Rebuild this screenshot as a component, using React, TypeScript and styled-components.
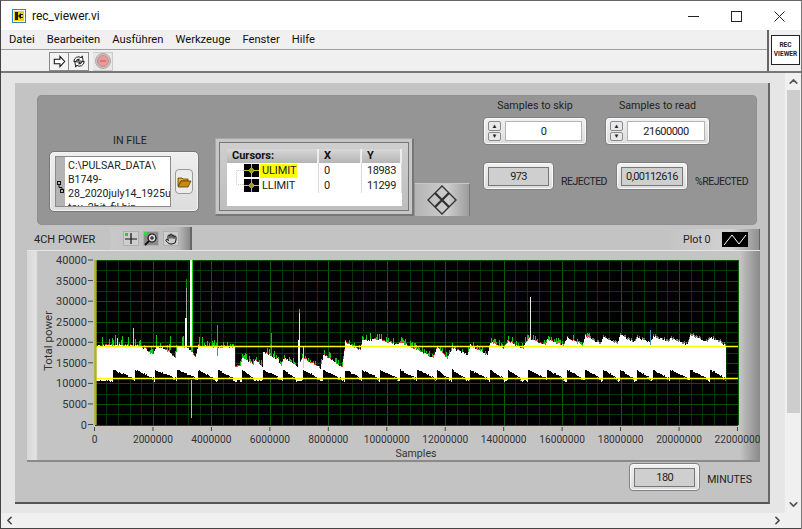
import React from 'react';
import styled, { createGlobalStyle } from 'styled-components';
import { ChevronDown, ChevronLeft, ChevronRight, ChevronUp, Hand } from 'lucide-react';

const UI_FONT = 'Roboto, "Open Sans", sans-serif';

const GlobalStyle = createGlobalStyle`
  html, body {
    margin: 0;
    padding: 0;
    background: #fff;
  }
  * {
    box-sizing: border-box;
  }
`;

const Window = styled.div`
  width: 802px;
  height: 529px;
  display: flex;
  flex-direction: column;
  overflow: hidden;
  font-family: ${UI_FONT};
  font-size: 11px;
  color: #222;
  background: #f0f0f0;
  border-left: 1px solid #444;
  border-top: 1px solid #666;
  border-right: 1px solid #777;
`;

const TitleBar = styled.div`
  height: 29px;
  flex: none;
  display: flex;
  align-items: center;
  background: #fff;
  padding: 1px 0 0 11px;
`;

const Title = styled.span`
  margin-left: 6px;
  font-size: 12px;
  color: #111;
`;

const WindowButtons = styled.div`
  margin-left: auto;
  display: flex;
`;

const WindowButton = styled.div`
  width: 43px;
  height: 28px;
  display: flex;
  align-items: center;
  justify-content: center;
`;

const Chrome = styled.div`
  height: 43px;
  flex: none;
  display: flex;
  background: #f0f0f0;
  border-bottom: 2px solid #777;
`;

const ChromeLeft = styled.div`
  width: 768px;
  display: flex;
  flex-direction: column;
  border-right: 2px solid #666;
`;

const MenuBar = styled.div`
  height: 20px;
  display: flex;
  align-items: center;
  padding-left: 8px;
  gap: 12px;
  font-size: 11.2px;
  color: #111;
  border-bottom: 1px solid #a0a0a0;
`;

const ToolBar = styled.div`
  flex: 1;
  display: flex;
  align-items: center;
  padding: 1px 0 0 48px;
`;

const ToolButton = styled.div`
  width: 20px;
  height: 19px;
  display: flex;
  align-items: center;
  justify-content: center;
  background: #f4f4f4;
  border: 1px solid #8a8a8a;
  & + & {
    border-left: none;
  }
`;

const StopButton = styled(ToolButton)`
  margin-left: 4px;
  border: 1px solid #ccc;
  background: #e8e8e8;
`;

const IconPane = styled.div`
  flex: 1;
  display: flex;
  align-items: center;
  padding: 0 0 2px 2px;
`;

const ViIcon = styled.div`
  width: 29px;
  height: 30px;
  background: #fff;
  border: 1px solid #222;
  display: flex;
  flex-direction: column;
  align-items: center;
  justify-content: center;
  font-size: 6.5px;
  font-weight: 700;
  line-height: 9px;
`;

const Body = styled.div`
  flex: 1;
  display: flex;
  min-height: 0;
`;

const PaneArea = styled.div`
  width: 784px;
  padding: 10px 15px 9px 14px;
  background: #e6e6e6;
`;

const Panel = styled.div`
  height: 100%;
  width: 755px;
  padding: 12px 0 0 12px;
  background: #c3c3c3;
  border-right: 2px solid #666;
  border-bottom: 2px solid #555;
`;

const VScroll = styled.div`
  flex: 1;
  display: flex;
  flex-direction: column;
  align-items: center;
  justify-content: space-between;
  background: #f0f0f0;
  color: #555;
`;

const VThumb = styled.div`
  align-self: stretch;
  height: 323px;
  background: #cdcdcd;
`;

const ScrollEnd = styled.div`
  height: 17px;
  display: flex;
  align-items: center;
  justify-content: center;
`;

const HScroll = styled.div`
  height: 16px;
  flex: none;
  display: flex;
  align-items: center;
  justify-content: space-between;
  padding: 0 17px 0 2px;
  background: #f0f0f0;
  color: #444;
  border-bottom: 1px solid #444;
`;

const GroupBox = styled.div`
  width: 720px;
  height: 130px;
  margin-left: 10px;
  display: flex;
  background: #959595;
  border-radius: 5px;
  box-shadow: inset 0 0 0 1px #8f8f8f;
`;

const FileColumn = styled.div`
  width: 150px;
  margin: 38px 0 0 12px;
  display: flex;
  flex-direction: column;
  align-items: center;
`;

const Label = styled.span`
  font-size: 10.7px;
  line-height: 16px;
  white-space: nowrap;
  color: #222;
`;

const FileLabel = styled(Label)`
  padding-left: 12px;
`;

const FileControl = styled.div`
  margin-top: 2px;
  width: 150px;
  height: 61px;
  display: flex;
  align-items: center;
  padding: 0 5px;
  background: linear-gradient(#efefef, #dcdcdc);
  border: 1px solid #777;
  border-radius: 5px;
  box-shadow: inset 0 0 0 1px #f4f4f4;
`;

const PathBox = styled.div`
  width: 117px;
  height: 51px;
  display: flex;
  overflow: hidden;
  background: #fff;
  border: 1px solid #8a8a8a;
`;

const PathStrip = styled.div`
  width: 9px;
  flex: none;
  display: flex;
  align-items: center;
  justify-content: center;
  padding-top: 10px;
  background: #b4b4b4;
`;

const PathText = styled.div`
  padding: 2px 0 0 3px;
  font-size: 10.6px;
  line-height: 14px;
  white-space: nowrap;
  color: #222;
`;

const BrowseButton = styled.div`
  width: 18px;
  height: 25px;
  margin-left: 4px;
  display: flex;
  align-items: center;
  justify-content: center;
  background: #ececec;
  border: 1px solid #9a9a9a;
  border-radius: 4px;
`;

const CursorColumn = styled.div`
  margin: 43px 0 0 16px;
  height: 78px;
  display: flex;
  align-items: flex-end;
`;

const CursorFrame = styled.div`
  width: 199px;
  height: 78px;
  padding: 10px 10px 9px 11px;
  background: linear-gradient(#cfcfcf, #bdbdbd);
  border: 1px solid #a8a8a8;
  border-right: 2px solid #777;
  border-bottom: 2px solid #777;
  box-shadow: inset 0 0 0 3px #c6c6c6, inset 0 0 0 4px #777;
`;

const CursorTable = styled.div`
  position: relative;
  height: 57px;
  display: grid;
  grid-template-columns: 92px 43px 1fr;
  grid-template-rows: 14px 15px 1fr;
  background: #fff;
  font-size: 11px;
`;

const HeaderCell = styled.div`
  padding-left: 5px;
  font-weight: 700;
  line-height: 14px;
  font-size: 11px;
  color: #111;
  background: linear-gradient(#d8d8d8, #b4b4b4);
  border-right: 2px solid #ededed;
`;

const Cell = styled.div<{ $pad?: number }>`
  height: 15px;
  display: flex;
  align-items: center;
  padding-left: ${(p) => p.$pad ?? 5}px;
  letter-spacing: -0.4px;
  border-right: 1px solid #d8d8d8;
`;

const Highlight = styled.span<{ $on?: boolean }>`
  margin-left: 1px;
  padding: 0 1px 0 2px;
  line-height: 14px;
  letter-spacing: -0.1px;
  background: ${(p) => (p.$on ? '#ffff00' : 'transparent')};
`;

const TreeLine = styled.div`
  position: absolute;
  left: 9px;
  top: 21px;
  width: 8px;
  height: 15px;
  border: 1px dotted #c8c8c8;
  border-right: none;
  border-radius: 2px 0 0 2px;
`;

const DiamondButton = styled.div`
  width: 55px;
  height: 33px;
  margin-left: 1px;
  display: flex;
  align-items: center;
  justify-content: center;
  background: linear-gradient(to right, #b4b4b4, #cecece 60%, #9c9c9c);
  border-top: 1px solid #c8c8c8;
  border-right: 1px solid #777;
`;

const NumbersColumn = styled.div`
  margin: 3px 0 0 13px;
  display: flex;
  flex-direction: column;
`;

const NumbersRow = styled.div<{ $gap: number }>`
  display: flex;
  gap: ${(p) => p.$gap}px;
`;

const Field = styled.div`
  display: flex;
  flex-direction: column;
  align-items: center;
`;

const FieldLabel = styled(Label)`
  margin-bottom: 3px;
`;

const Bevel = styled.div<{ $w: number }>`
  width: ${(p) => p.$w}px;
  height: 28px;
  display: flex;
  align-items: center;
  padding: 0 4px;
  background: linear-gradient(#f1f1f1, #dcdcdc);
  border: 1px solid #7f7f7f;
  border-radius: 4px;
  box-shadow: inset 0 0 0 1px #fafafa;
`;

const Spinner = styled.div`
  width: 13px;
  height: 20px;
  flex: none;
  display: flex;
  flex-direction: column;
  gap: 1px;
`;

const SpinButton = styled.div`
  flex: 1;
  display: flex;
  align-items: center;
  justify-content: center;
  font-size: 6px;
  line-height: 1;
  color: #222;
  background: #e9e9e9;
  border: 1px solid #8a8a8a;
  border-radius: 2px;
`;

const NumberInput = styled.div`
  flex: 1;
  height: 20px;
  margin-left: 4px;
  text-align: center;
  line-height: 19px;
  font-size: 11px;
  letter-spacing: -0.5px;
  background: #fff;
  border: 1px solid #b4b4b4;
`;

const Readout = styled.div`
  flex: 1;
  height: 19px;
  text-align: center;
  line-height: 18px;
  font-size: 11px;
  letter-spacing: -0.6px;
  background: #cfcfcf;
  border: 1px solid #777;
`;

const ResultRow = styled(NumbersRow)`
  margin-top: 17px;
`;

const ResultLabel = styled(Label)`
  margin: 12px 0 0 7px;
  font-size: 10.5px;
  letter-spacing: -0.5px;
`;

const ResultGap = styled.div<{ $w: number }>`
  width: ${(p) => p.$w}px;
`;

const GraphHeader = styled.div`
  width: 733px;
  height: 25px;
  display: flex;
  align-items: flex-end;
`;

const GraphName = styled.span`
  width: 83px;
  padding: 0 0 4px 7px;
  font-size: 11px;
  white-space: nowrap;
  color: #222;
`;

const Palette = styled.div`
  width: 82px;
  height: 23px;
  display: flex;
  align-items: center;
  gap: 4px;
  padding-left: 13px;
  background: linear-gradient(to right, #c8c8c8, #bcbcbc 85%, #8a8a8a);
  border-right: 2px solid #666;
`;

const PaletteTool = styled.div<{ $on?: boolean }>`
  width: 16px;
  height: 15px;
  display: flex;
  align-items: center;
  justify-content: center;
  background: ${(p) => (p.$on ? '#8c8c8c' : '#cecece')};
  border: 1px solid #b0b0b0;
`;

const PlotLegend = styled.div`
  margin-left: auto;
  width: 91px;
  height: 21px;
  display: flex;
  align-items: center;
  padding-left: 14px;
  gap: 11px;
  font-size: 10.7px;
  background: linear-gradient(to right, #c4c4c4, #d2d2d2 70%, #909090);
  border-right: 1px solid #666;
`;

const LegendSwatch = styled.div`
  width: 26px;
  height: 15px;
  background: #000;
  display: flex;
`;

const GraphFrame = styled.div`
  width: 733px;
  height: 212px;
  background: linear-gradient(
    to right,
    #d8d8d8,
    #e2e2e2 9px,
    #c4c4c4 11px,
    #c4c4c4 calc(100% - 20px),
    #8c8c8c calc(100% - 1px)
  );
  border-bottom: 2px solid #8a8a8a;
  border-top: 1px solid #e4e4e4;
`;

const Chart = styled.svg`
  display: block;
  font-family: ${UI_FONT};
  fill: #333;
`;

const Footer = styled.div`
  width: 733px;
  margin-top: 1px;
  display: flex;
  align-items: center;
  justify-content: flex-end;
`;

const MinutesLabel = styled(Label)`
  margin: 6px 8px 0 7px;
  font-size: 10.5px;
`;

// --- chart data, page coordinates ---

const PLOT = { left: 95, right: 738, top: 260, bottom: 425 };
const yOf = (v: number) => 424.5 - (v / 40000) * 164.5;
const xOf = (v: number) => 94.5 + (v / 22000000) * 643;

const TOP_EDGE: [number, number][] = [
  [95, 346], [115, 345], [133, 346], [137, 345], [143, 348], [153, 355], [156, 346], [165, 349],
  [175, 358], [177, 346], [187, 347], [195, 357], [198, 346], [216, 347], [234, 347], [235, 367],
  [240, 366], [242, 357], [250, 362], [253, 366], [254, 360], [262, 366], [263, 352], [278, 360],
  [281, 367], [283, 358], [295, 365], [297, 366], [303, 358], [320, 368], [323, 355], [342, 367],
  [345, 342], [360, 350], [362, 340], [380, 340], [398, 345], [400, 342], [417, 350], [433, 358],
  [437, 347], [447, 358], [452, 348], [467, 355], [470, 345], [487, 355], [490, 342], [503, 348],
  [508, 342], [523, 348], [528, 338], [545, 345], [547, 340], [563, 345], [567, 338], [582, 345],
  [585, 336], [600, 344], [603, 337], [617, 344], [620, 335], [633, 342], [637, 338], [650, 342],
  [653, 336], [668, 342], [670, 338], [687, 345], [690, 335], [707, 342], [710, 337], [725, 345],
];

const TEETH: [number, number][] = [
  [113, 133], [135, 153], [155, 175], [177, 196], [198, 214], [218, 232], [242, 253], [263, 280],
  [283, 295], [303, 319], [323, 340], [345, 360], [362, 378], [380, 397], [400, 415], [417, 435],
  [437, 448], [452, 465], [470, 487], [490, 503], [508, 520], [528, 545], [547, 563], [567, 582],
  [585, 600], [603, 617], [620, 633], [637, 650], [653, 668], [670, 687], [690, 707], [710, 725],
];

const SPIKES: { x: number; top: number; bottom: number; color: string; width?: number }[] = [
  { x: 117, top: 338, bottom: 346, color: '#ddd' },
  { x: 133, top: 328, bottom: 346, color: '#ccc' },
  { x: 156, top: 335, bottom: 346, color: '#11c811' },
  { x: 170, top: 336, bottom: 350, color: '#11c811' },
  { x: 186, top: 279, bottom: 288, color: '#0a8a0a' },
  { x: 186, top: 288, bottom: 318, color: '#a8a8a8' },
  { x: 185.5, top: 318, bottom: 346, color: '#fff', width: 2 },
  { x: 191, top: 260, bottom: 346, color: '#fff', width: 2 },
  { x: 192.5, top: 260, bottom: 346, color: '#19d419' },
  { x: 191.5, top: 380, bottom: 418, color: '#b8b8b8' },
  { x: 217, top: 325, bottom: 356, color: '#3f8fc4' },
  { x: 271, top: 333, bottom: 356, color: '#d24a4a' },
  { x: 299, top: 309, bottom: 313, color: '#19d419' },
  { x: 299, top: 313, bottom: 340, color: '#e0e0e0' },
  { x: 299, top: 340, bottom: 368, color: '#fff', width: 2 },
  { x: 303, top: 346, bottom: 368, color: '#cfcfcf' },
  { x: 530, top: 297, bottom: 340, color: '#e8e8e8' },
  { x: 650, top: 330, bottom: 345, color: '#3f8fc4' },
];

const topAt = (x: number) => {
  for (let i = 1; i < TOP_EDGE.length; i++) {
    const [x0, y0] = TOP_EDGE[i - 1];
    const [x1, y1] = TOP_EDGE[i];
    if (x <= x1) return y0 + ((x - x0) / (x1 - x0)) * (y1 - y0);
  }
  return 345;
};

function buildTrace() {
  let seed = 7;
  const rand = () => {
    seed = (seed * 16807) % 2147483647;
    return seed / 2147483647;
  };
  let white = '';
  let black = '';
  let green = '';
  let red = '';
  let cyan = '';
  let fringe = '';
  for (let x = 95; x <= 725; x++) {
    const top = Math.round(topAt(x) + rand() * 2 - 1);
    const tooth = TEETH.find(([a, b]) => x >= a && x <= b);
    const low = tooth
      ? 370 + ((x - tooth[0]) / (tooth[1] - tooth[0])) * 8 + rand() * 1.4 - 0.7
      : 380 + rand() * 2;
    const px = x + 0.5;
    white += `M${px} ${top}V${Math.round(low)}`;
    if (tooth) black += `M${px} ${Math.round(low)}V379`;
    if (tooth && x > tooth[1] - 4) cyan += `M${px} ${Math.round(low) + 1}V${Math.round(low) + 2}`;
    if (x < 590) {
      const amp = x < 215 ? 8 : 4;
      if (rand() < 0.4) green += `M${px} ${top - 2 - Math.round(rand() * amp)}V${top}`;
      if (rand() < 0.55) red += `M${px} ${top - 1}V${top + 1}`;
    } else if (rand() < 0.6) {
      fringe += `M${px} ${top - 2}V${top}`;
      if (rand() < 0.3) red += `M${px} ${top - 2}V${top - 1}`;
    }
  }
  return { white, black, green, red, cyan, fringe };
}

const TRACE = buildTrace();

const X_TICKS = Array.from({ length: 12 }, (_, i) => i * 2000000);
const Y_TICKS = Array.from({ length: 9 }, (_, i) => i * 5000);

function PlotGrid() {
  const lines = [];
  for (let v = 0; v <= 22000000; v += 400000) {
    const major = v % 2000000 === 0;
    const x = Math.round(xOf(v)) + 0.5;
    lines.push(<line key={`v${v}`} x1={x} x2={x} y1={PLOT.top} y2={PLOT.bottom} stroke={major ? '#0a5c0a' : '#053405'} />);
  }
  for (let v = 0; v <= 40000; v += 2500) {
    const major = v % 5000 === 0;
    const y = Math.round(yOf(v)) + 0.5;
    lines.push(<line key={`h${v}`} x1={PLOT.left} x2={PLOT.right} y1={y} y2={y} stroke={major ? '#095009' : '#063a06'} />);
  }
  return <g>{lines}</g>;
}

function PowerChart() {
  return (
    <Chart width={733} height={209} viewBox="27 251 733 209">
      <rect x={PLOT.left} y={PLOT.top} width={PLOT.right - PLOT.left} height={PLOT.bottom - PLOT.top} fill="#000" />
      <PlotGrid />
      <g shapeRendering="crispEdges" fill="none" strokeWidth={1}>
        <path d={TRACE.black} stroke="#000" />
        <path d={TRACE.green} stroke="#19c819" />
        <path d={TRACE.red} stroke="#e23c3c" />
        <path d={TRACE.fringe} stroke="#777" />
        <path d={TRACE.white} stroke="#fff" />
        <path d={TRACE.cyan} stroke="#49b8e0" />
        {SPIKES.map((s, i) => (
          <line key={i} x1={s.x} x2={s.x} y1={s.top} y2={s.bottom} stroke={s.color} strokeWidth={s.width ?? 1} />
        ))}
      </g>
      <line x1={95} x2={738} y1={346.5} y2={346.5} stroke="#ffff00" strokeWidth={1.4} />
      <line x1={95} x2={738} y1={378.5} y2={378.5} stroke="#ffff00" strokeWidth={1.4} />
      <line x1={95.5} x2={95.5} y1={260} y2={425} stroke="#b0b020" strokeWidth={2.4} />
      {Y_TICKS.map((v) => (
        <g key={v}>
          <line x1={88} x2={93} y1={yOf(v)} y2={yOf(v)} stroke="#444" />
          <text x={87} y={yOf(v) + 4} textAnchor="end" fontSize={11}>
            {v}
          </text>
        </g>
      ))}
      {X_TICKS.map((v) => (
        <g key={v}>
          <line x1={xOf(v)} x2={xOf(v)} y1={427} y2={431} stroke="#444" />
          <text x={xOf(v)} y={443} textAnchor="middle" fontSize={10.2}>
            {v}
          </text>
        </g>
      ))}
      <text x={416} y={457} textAnchor="middle" fontSize={10.6}>
        Samples
      </text>
      <text transform="translate(52 341) rotate(-90)" textAnchor="middle" fontSize={11.5}>
        Total power
      </text>
    </Chart>
  );
}

// --- small drawings ---

function AppIcon() {
  return (
    <svg width="14" height="14" viewBox="0 0 14 14">
      <rect x="0.5" y="0.5" width="13" height="13" fill="#fff" stroke="#2f80d0" />
      <rect x="2" y="2" width="10" height="10" fill="#f2d000" />
      <path d="M3 3h3v8H3zM8 5h3v1H8zM8 8h3v1H8z" fill="#222" />
      <path d="M6 7l3-3v6z" fill="#111" />
    </svg>
  );
}

function CursorGlyph() {
  return (
    <svg width="15" height="13" viewBox="0 0 15 13">
      <rect width="15" height="13" fill="#000" />
      <path d="M0 6.5h15M7.5 0v13" stroke="#c8c820" />
      <path d="M7.5 3.5l3 3-3 3-3-3z" fill="#a0a020" stroke="#e0e030" strokeWidth="0.6" />
    </svg>
  );
}

function FolderGlyph() {
  return (
    <svg width="15" height="12" viewBox="0 0 15 12">
      <path d="M1 2h4l1 1h5v2H4L1 10z" fill="#e8a820" stroke="#5a3c00" strokeWidth="0.8" />
      <path d="M1 11l3-6h10l-3 6z" fill="#c98a10" stroke="#5a3c00" strokeWidth="0.8" />
    </svg>
  );
}

function PathGlyph() {
  return (
    <svg width="7" height="12" viewBox="0 0 7 12" fill="none" stroke="#111">
      <rect x="0.5" y="0.5" width="3" height="3" />
      <rect x="3.5" y="8.5" width="3" height="3" />
      <path d="M2 3.5V6.5H5V8.5" />
    </svg>
  );
}

function DiamondGlyph() {
  return (
    <svg width="30" height="30" viewBox="0 0 30 30" fill="none" stroke="#333" strokeWidth="1.4">
      <path d="M15 1l14 14-14 14L1 15z" />
      <path d="M8 8l14 14M22 8L8 22" strokeWidth="2.4" />
    </svg>
  );
}

function RunGlyph() {
  return (
    <svg width="13" height="13" viewBox="0 0 15 14">
      <path d="M1.5 4.5h6.5V1l5.5 6L8 13V9.5H1.5z" fill="#fff" stroke="#111" strokeWidth="1.2" />
    </svg>
  );
}

function RunLoopGlyph() {
  return (
    <svg width="16" height="15" viewBox="0 0 17 16" fill="none" stroke="#111" strokeWidth="1">
      <path d="M3 8a5 5 0 0 1 8-4l1-2 1 6-6-1 2-1.5A3.4 3.4 0 0 0 5 8z" fill="#fff" />
      <path d="M14 8a5 5 0 0 1-8 4l-1 2-1-6 6 1-2 1.5A3.4 3.4 0 0 0 12 8z" fill="#fff" />
    </svg>
  );
}

function StopGlyph() {
  return (
    <svg width="16" height="16" viewBox="0 0 16 16">
      <circle cx="8" cy="8" r="7.5" fill="#c8c8c8" stroke="#aaa" />
      <circle cx="8" cy="8" r="5.5" fill="#eb9a9a" stroke="#c88" />
      <path d="M5 8h6" stroke="#d07a7a" strokeWidth="2" />
    </svg>
  );
}

function CrossTool() {
  return (
    <svg width="14" height="13" viewBox="0 0 14 13">
      <path d="M7 1v11M1 7h12" stroke="#111" strokeWidth="1.2" />
      <rect x="1" y="1" width="3" height="3" fill="#2fc82f" />
    </svg>
  );
}

function ZoomTool() {
  return (
    <svg width="14" height="14" viewBox="0 0 14 14" fill="none">
      <rect x="0" y="0" width="3" height="3" fill="#2fe02f" />
      <circle cx="8" cy="6" r="4" fill="#d8d8d8" stroke="#111" strokeWidth="1.2" />
      <path d="M5 9l-4 4" stroke="#111" strokeWidth="1.8" />
      <path d="M6 6h4M8 4v4" stroke="#111" />
    </svg>
  );
}

function PlotLine() {
  return (
    <svg width="26" height="15" viewBox="0 0 26 15" fill="none" stroke="#fff">
      <path d="M2 13L10 3l7 9 7-9" />
    </svg>
  );
}

function App() {
  return (
    <Window>
      <GlobalStyle />
      <TitleBar>
        <AppIcon />
        <Title>rec_viewer.vi</Title>
        <WindowButtons>
          <WindowButton>
            <svg width="11" height="11" viewBox="0 0 11 11" stroke="#222">
              <path d="M0 5.5h11" />
            </svg>
          </WindowButton>
          <WindowButton>
            <svg width="11" height="11" viewBox="0 0 11 11" fill="none" stroke="#222">
              <rect x="0.5" y="0.5" width="10" height="10" />
            </svg>
          </WindowButton>
          <WindowButton>
            <svg width="11" height="11" viewBox="0 0 11 11" stroke="#222">
              <path d="M0.5 0.5l10 10M10.5 0.5l-10 10" />
            </svg>
          </WindowButton>
        </WindowButtons>
      </TitleBar>
      <Chrome>
        <ChromeLeft>
          <MenuBar>
            <span>Datei</span>
            <span>Bearbeiten</span>
            <span>Ausführen</span>
            <span>Werkzeuge</span>
            <span>Fenster</span>
            <span>Hilfe</span>
          </MenuBar>
          <ToolBar>
            <ToolButton>
              <RunGlyph />
            </ToolButton>
            <ToolButton>
              <RunLoopGlyph />
            </ToolButton>
            <StopButton>
              <StopGlyph />
            </StopButton>
          </ToolBar>
        </ChromeLeft>
        <IconPane>
          <ViIcon>
            <span>REC</span>
            <span>VIEWER</span>
          </ViIcon>
        </IconPane>
      </Chrome>
      <Body>
        <PaneArea>
          <Panel>
            <GroupBox>
              <FileColumn>
                <FileLabel>IN FILE</FileLabel>
                <FileControl>
                  <PathBox>
                    <PathStrip>
                      <PathGlyph />
                    </PathStrip>
                    <PathText>
                      C:\PULSAR_DATA\
                      <br />
                      B1749-
                      <br />
                      28_2020july14_1925u
                      <br />
                      tau_2bit_fil.bin
                    </PathText>
                  </PathBox>
                  <BrowseButton>
                    <FolderGlyph />
                  </BrowseButton>
                </FileControl>
              </FileColumn>
              <CursorColumn>
                <CursorFrame>
                  <CursorTable>
                    <HeaderCell>Cursors:</HeaderCell>
                    <HeaderCell>X</HeaderCell>
                    <HeaderCell>Y</HeaderCell>
                    <Cell $pad={17}>
                      <CursorGlyph />
                      <Highlight $on>ULIMIT</Highlight>
                    </Cell>
                    <Cell>0</Cell>
                    <Cell>18983</Cell>
                    <Cell $pad={17}>
                      <CursorGlyph />
                      <Highlight>LLIMIT</Highlight>
                    </Cell>
                    <Cell>0</Cell>
                    <Cell>11299</Cell>
                    <TreeLine />
                  </CursorTable>
                </CursorFrame>
                <DiamondButton>
                  <DiamondGlyph />
                </DiamondButton>
              </CursorColumn>
              <NumbersColumn>
                <NumbersRow $gap={18}>
                  <Field>
                    <FieldLabel>Samples to skip</FieldLabel>
                    <Bevel $w={104}>
                      <Spinner>
                        <SpinButton>▲</SpinButton>
                        <SpinButton>▼</SpinButton>
                      </Spinner>
                      <NumberInput>0</NumberInput>
                    </Bevel>
                  </Field>
                  <Field>
                    <FieldLabel>Samples to read</FieldLabel>
                    <Bevel $w={105}>
                      <Spinner>
                        <SpinButton>▲</SpinButton>
                        <SpinButton>▼</SpinButton>
                      </Spinner>
                      <NumberInput>21600000</NumberInput>
                    </Bevel>
                  </Field>
                </NumbersRow>
                <ResultRow $gap={0}>
                  <Bevel $w={71}>
                    <Readout>973</Readout>
                  </Bevel>
                  <ResultLabel>REJECTED</ResultLabel>
                  <ResultGap $w={9} />
                  <Bevel $w={72}>
                    <Readout>0,00112616</Readout>
                  </Bevel>
                  <ResultLabel>%REJECTED</ResultLabel>
                </ResultRow>
              </NumbersColumn>
            </GroupBox>
            <GraphHeader>
              <GraphName>4CH POWER</GraphName>
              <Palette>
                <PaletteTool>
                  <CrossTool />
                </PaletteTool>
                <PaletteTool $on>
                  <ZoomTool />
                </PaletteTool>
                <PaletteTool>
                  <Hand size={12} color="#111" />
                </PaletteTool>
              </Palette>
              <PlotLegend>
                <span>Plot 0</span>
                <LegendSwatch>
                  <PlotLine />
                </LegendSwatch>
              </PlotLegend>
            </GraphHeader>
            <GraphFrame>
              <PowerChart />
            </GraphFrame>
            <Footer>
              <Bevel $w={71}>
                <Readout>180</Readout>
              </Bevel>
              <MinutesLabel>MINUTES</MinutesLabel>
            </Footer>
          </Panel>
        </PaneArea>
        <VScroll>
          <div>
            <ScrollEnd>
              <ChevronUp size={13} strokeWidth={3} />
            </ScrollEnd>
            <VThumb />
          </div>
          <ScrollEnd>
            <ChevronDown size={13} strokeWidth={3} />
          </ScrollEnd>
        </VScroll>
      </Body>
      <HScroll>
        <ChevronLeft size={13} strokeWidth={3} />
        <ChevronRight size={13} strokeWidth={3} />
      </HScroll>
    </Window>
  );
}

export default App;
